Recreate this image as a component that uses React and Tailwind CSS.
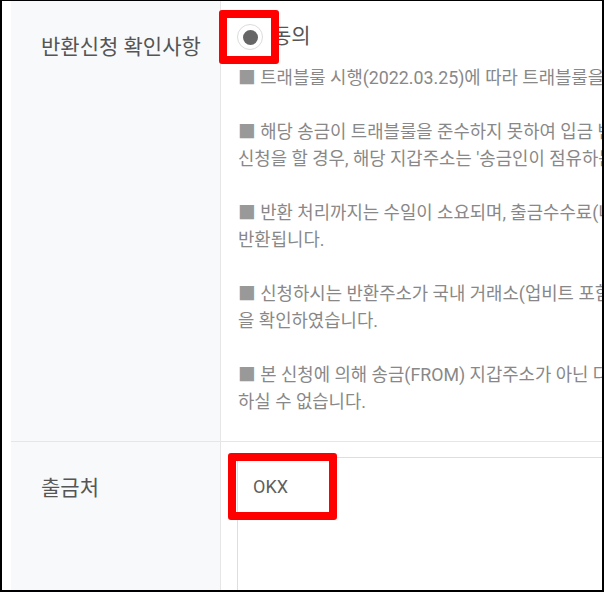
import React from "react";

const font = { fontFamily: 'Roboto, "Noto Sans CJK KR", sans-serif' };

function Para({ lines }) {
  return (
    <div className="flex flex-col">
      {lines.map((l, i) => (
        <div key={i} className="whitespace-nowrap h-[27px] leading-[27px]">
          {i === 0 ? (
            <>
              <span className="text-[#999999]">■</span>
              {l}
            </>
          ) : (
            l
          )}
        </div>
      ))}
    </div>
  );
}

export default function App() {
  return (
    <div
      className="relative w-[604px] h-[592px] overflow-hidden bg-white border-black border-l-2 border-t border-r-2 border-b-2 box-border"
      style={font}
    >
      <div className="pl-[9px] flex flex-col w-[1200px]">
        {/* Row 1 */}
        <div className="flex h-[441px] border-b border-[#e6e6e6]">
          <div className="w-[209px] shrink-0 bg-[#f8f9fa] pl-[30px] pt-[32px]">
            <div className="text-[21px] leading-[28px] text-[#555555] whitespace-nowrap">
              반환신청 확인사항
            </div>
          </div>
          <div className="flex-1 border-l border-[#e6e6e6] pl-[16px] pt-[23px]">
            <div className="flex items-center h-[26px]">
              <div className="w-[26px] h-[26px] rounded-full border border-[#dcdcdc] bg-white flex items-center justify-center">
                <div className="w-[15px] h-[15px] rounded-full bg-[#666666]" />
              </div>
              <span className="ml-[9px] text-[21px] text-[#555555]">동의</span>
            </div>
            <div className="mt-[14px] ml-[1px] text-[17.8px] text-[#888888] flex flex-col gap-[27px]">
              <Para lines={[" 트래블룰 시행(2022.03.25)에 따라 트래블룰을 준수하지 않은 입금은 반환됩니다."]} />
              <Para
                lines={[
                  " 해당 송금이 트래블룰을 준수하지 못하여 입금 반환",
                  "신청을 할 경우, 해당 지갑주소는 '송금인이 점유하는 지갑'으로 간주됩니다.",
                ]}
              />
              <Para
                lines={[
                  " 반환 처리까지는 수일이 소요되며, 출금수수료(네트워크 수수료)를 제외한 금액이",
                  "반환됩니다.",
                ]}
              />
              <Para
                lines={[
                  " 신청하시는 반환주소가 국내 거래소(업비트 포함)의 주소가 아님",
                  "을 확인하였습니다.",
                ]}
              />
              <Para
                lines={[
                  " 본 신청에 의해 송금(FROM) 지갑주소가 아닌 다른 주소로 반환된 경우 이의를 제기",
                  "하실 수 없습니다.",
                ]}
              />
            </div>
          </div>
        </div>
        {/* Row 2 */}
        <div className="flex h-[300px]">
          <div className="w-[209px] shrink-0 bg-[#f8f9fa] pl-[30px] pt-[32px]">
            <div className="text-[21px] leading-[28px] text-[#555555] whitespace-nowrap">
              출금처
            </div>
          </div>
          <div className="flex-1 border-l border-[#e6e6e6] pl-[16px] pt-[15px]">
            <div className="w-[900px] h-[260px] border border-[#dedede] pl-[15px] pt-[15px]">
              <div className="text-[18px] leading-[27px] text-[#5f5f5f]">OKX</div>
            </div>
          </div>
        </div>
      </div>

      {/* red annotation boxes */}
      <div className="absolute left-[217px] top-[9px] w-[60px] h-[54px] border-[8px] border-[#ff0000] rounded-[3px]" />
      <div className="absolute left-[226px] top-[452px] w-[109px] h-[67px] border-[8px] border-[#ff0000] rounded-[3px]" />
    </div>
  );
}
